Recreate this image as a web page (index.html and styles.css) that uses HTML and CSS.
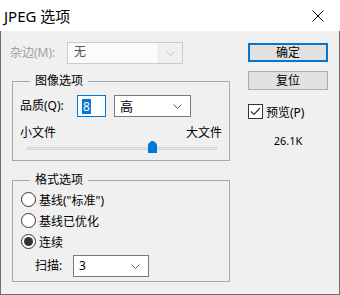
FILE: index.html
```html
<!DOCTYPE html>
<html lang="zh">
<head>
    <meta charset="UTF-8">
    <title>JPEG 选项</title>
    <link rel="stylesheet" href="styles.css">
</head>
<body>

    <div class="window">
        <div class="titlebar">
            <span class="title">JPEG 选项</span>
            <svg class="close" width="12" height="12" viewBox="0 0 12 12">
                <path d="M0.5 0.5 L11.5 11.5 M11.5 0.5 L0.5 11.5" stroke="#000" stroke-width="1"/>
            </svg>
        </div>

        <div class="dialog-body">
            <div class="main">
                <!-- 杂边 -->
                <div class="matte-row">
                    <span class="label disabled">杂边(M):</span>
                    <div class="combo combo-disabled">
                        <span class="combo-field">无</span>
                        <span class="combo-arrow">
                            <svg width="9" height="5" viewBox="0 0 9 5"><path d="M0.5 0.5 L4.5 4.5 L8.5 0.5" fill="none" stroke="#c4c4c4"/></svg>
                        </span>
                    </div>
                </div>

                <!-- 图像选项 -->
                <fieldset class="group image-group">
                    <legend>图像选项</legend>
                    <div class="quality-row">
                        <span class="label">品质(Q):</span>
                        <div class="num-input"><span class="selected">8</span></div>
                        <div class="combo quality-combo">
                            <span class="combo-text">高</span>
                            <svg width="9" height="5" viewBox="0 0 9 5"><path d="M0.5 0.5 L4.5 4.5 L8.5 0.5" fill="none" stroke="#606060"/></svg>
                        </div>
                    </div>
                    <div class="size-row">
                        <span>小文件</span>
                        <span>大文件</span>
                    </div>
                    <div class="slider">
                        <div class="track"></div>
                        <svg class="thumb" width="9" height="12" viewBox="0 0 9 12">
                            <path d="M0 12 L0 4 Q0 3 1 2 L3.5 0 L5.5 0 L8 2 Q9 3 9 4 L9 12 Z" fill="#0078d7"/>
                        </svg>
                    </div>
                </fieldset>

                <!-- 格式选项 -->
                <fieldset class="group format-group">
                    <legend>格式选项</legend>
                    <div class="radio-row"><span class="radio"></span><span>基线("标准")</span></div>
                    <div class="radio-row"><span class="radio"></span><span>基线已优化</span></div>
                    <div class="radio-row"><span class="radio checked"></span><span>连续</span></div>
                    <div class="scan-row">
                        <span class="label">扫描:</span>
                        <div class="combo scan-combo">
                            <span class="combo-text">3</span>
                            <svg width="9" height="5" viewBox="0 0 9 5"><path d="M0.5 0.5 L4.5 4.5 L8.5 0.5" fill="none" stroke="#606060"/></svg>
                        </div>
                    </div>
                </fieldset>
            </div>

            <div class="side">
                <button class="btn btn-default">确定</button>
                <button class="btn">复位</button>
                <div class="check-row">
                    <span class="checkbox">
                        <svg width="13" height="13" viewBox="0 0 13 13"><path d="M2 6.5 L5 9.5 L11 3" fill="none" stroke="#333" stroke-width="1.2"/></svg>
                    </span>
                    <span>预览(P)</span>
                </div>
                <div class="file-size">26.1K</div>
            </div>
        </div>
    </div>

</body>
</html>
```

FILE: styles.css
```css
body {
    margin: 0;
    font-family: "Noto Sans", "Noto Sans CJK SC", sans-serif;
    font-size: 12px;
    color: #000;
    background-color: #fff;
}

.window {
    width: 340px;
    height: 295px;
}

.titlebar {
    height: 31px;
    background-color: #fff;
    display: flex;
    align-items: center;
    justify-content: space-between;
    padding: 0 16px 0 4px;
}

.title {
    font-size: 15px;
    line-height: 20px;
    margin-top: 0;
}

.close {
    display: block;
}

.dialog-body {
    height: 264px;
    box-sizing: border-box;
    background-color: #f0f0f0;
    border: 1px solid #6e6e6e;
    border-top: none;
    display: flex;
}

.main {
    width: 229px;
    padding-top: 11px;
}

.label {
    line-height: 16px;
}

.disabled {
    color: #a0a0a0;
}

.matte-row {
    display: flex;
    align-items: center;
    height: 22px;
    margin-left: 9px;
}

.matte-row .label {
    width: 57px;
}

/* 콤보박스 */
.combo {
    box-sizing: border-box;
    height: 22px;
    display: flex;
    align-items: center;
    justify-content: space-between;
    background-color: #fff;
    border: 1px solid #7a7a7a;
    padding: 0 8px 0 5px;
}

.combo-disabled {
    width: 116px;
    background-color: #f0f0f0;
    border-color: #cccccc;
    padding: 0;
}

.combo-field {
    box-sizing: border-box;
    width: 91px;
    height: 20px;
    line-height: 18px;
    padding-left: 6px;
    background-color: #fbfbfb;
    border-right: 1px solid #e6e6e6;
    color: #555;
}

.combo-arrow {
    flex: 1;
    display: flex;
    justify-content: center;
}

.combo svg {
    display: block;
}

.combo-text {
    line-height: 16px;
}

/* 그룹 박스 */
.group {
    box-sizing: border-box;
    width: 218px;
    margin: 0 0 0 11px;
    padding: 0;
    border: 1px solid #a8a8a8;
}

.group legend {
    margin-left: 10px;
    padding: 0 5px;
    line-height: 16px;
}

.image-group {
    margin-top: 9px;
    padding: 0 7px 7px 7px;
}

.quality-row {
    display: flex;
    align-items: center;
    margin-top: 6px;
    height: 22px;
}

.quality-row .label {
    width: 57px;
}

.num-input {
    box-sizing: border-box;
    width: 29px;
    height: 22px;
    border: 1px solid #0078d7;
    background-color: #fff;
    padding: 2px 0 0 4px;
}

.selected {
    display: inline-block;
    background-color: #0078d7;
    color: #fff;
    line-height: 15px;
    padding: 0 1px;
}

.quality-combo {
    width: 77px;
    margin-left: 8px;
    font-size: 13px;
}

.size-row {
    display: flex;
    justify-content: space-between;
    margin-top: 8px;
    line-height: 16px;
}

.slider {
    position: relative;
    height: 12px;
    margin: 0 5px 0 7px;
}

.track {
    position: relative;
    top: 6px;
    height: 3px;
    box-sizing: border-box;
    background-color: #e7e7e7;
    border: 1px solid #d6d6d6;
}

.thumb {
    position: absolute;
    left: 121px;
    top: 0;
}

.format-group {
    margin-top: 11px;
    padding: 1px 7px 4px 7px;
}

.radio-row {
    display: flex;
    align-items: center;
    height: 21px;
    margin-left: 1px;
    gap: 3px;
}

.radio {
    box-sizing: border-box;
    width: 15px;
    height: 15px;
    border: 1px solid #333;
    border-radius: 50%;
    background-color: #fff;
    display: flex;
    align-items: center;
    justify-content: center;
}

.radio.checked::after {
    content: "";
    width: 9px;
    height: 9px;
    border-radius: 50%;
    background-color: #333;
}

.scan-row {
    display: flex;
    align-items: center;
    margin-top: 3px;
    margin-left: 15px;
    height: 22px;
}

.scan-row .label {
    width: 38px;
}

.scan-combo {
    width: 76px;
}

/* 오른쪽 버튼 */
.side {
    width: 80px;
    margin-left: 18px;
    padding-top: 12px;
    display: flex;
    flex-direction: column;
}

.btn {
    box-sizing: border-box;
    width: 80px;
    height: 19px;
    padding: 0;
    font: inherit;
    line-height: 15px;
    background-color: #e1e1e1;
    border: 1px solid #adadad;
    color: #000;
}

.btn-default {
    border: 2px solid #0078d7;
    margin-bottom: 9px;
}

.check-row {
    display: flex;
    align-items: center;
    gap: 3px;
    margin-top: 14px;
    height: 15px;
}

.checkbox {
    box-sizing: border-box;
    width: 15px;
    height: 15px;
    border: 1px solid #333;
    background-color: #fff;
}

.checkbox svg {
    display: block;
}

.file-size {
    margin-top: 14px;
    line-height: 16px;
    text-align: center;
    font-size: 11px;
}
```
